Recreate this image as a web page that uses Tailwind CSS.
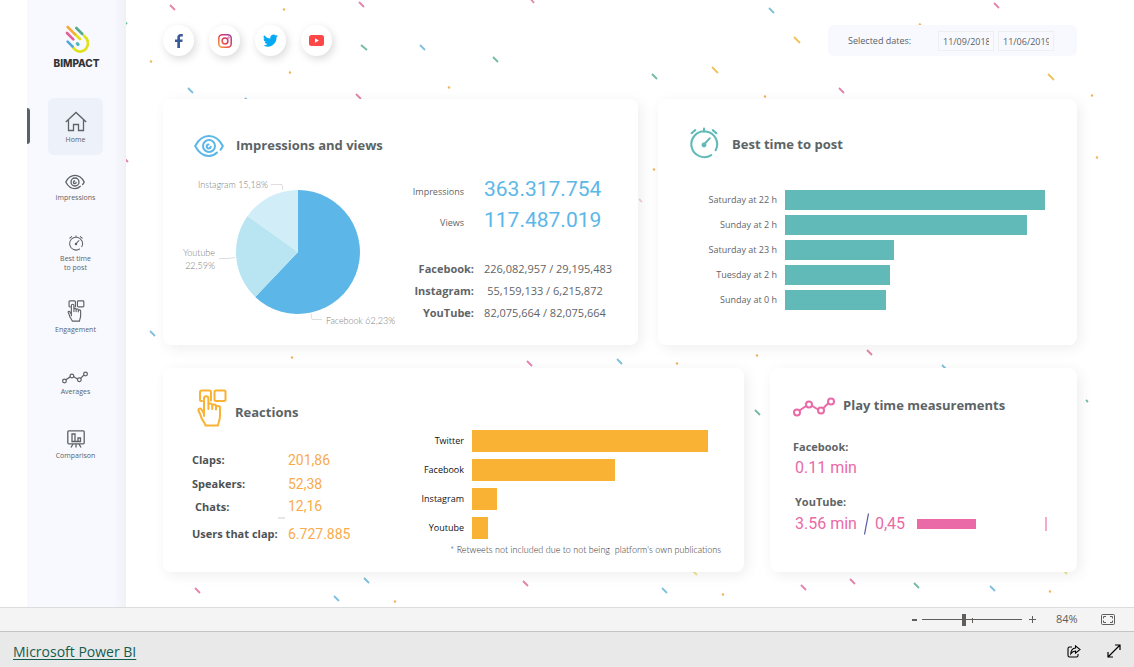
<!DOCTYPE html>
<html lang="en">
<head>
<meta charset="utf-8">
<meta name="viewport" content="width=device-width, initial-scale=1">
<title>Bimpact – Social media dashboard</title>
<script src="https://cdn.jsdelivr.net/npm/@tailwindcss/browser@4"></script>
</head>
<body class="flex min-h-screen flex-col bg-white font-['Open_Sans','Noto_Sans',sans-serif] text-[#5f6567]">

<!-- shared icon shapes -->
<svg class="hidden" aria-hidden="true">
  <symbol id="eye" viewBox="0 0 30 22">
    <g fill="none" stroke="currentColor" stroke-width="2" stroke-linecap="round">
      <path d="M23 17.500C20.500 20 18 21 15 21C8 21 3.500 15.500 1.200 11C3.500 6.500 8 1 15 1s11.500 5.500 13.800 10c-.7 1.500-1.400 2.700-2.300 3.800"/>
      <circle cx="15" cy="11" r="6"/>
      <path d="M14.500 9.500a2 2 0 1 0 2.200 2.200"/>
    </g>
  </symbol>
  <symbol id="watch" viewBox="0 0 28 31">
    <g fill="none" stroke="currentColor" stroke-width="2" stroke-linecap="round">
      <path d="M21 27.200A12.500 12.500 0 1 1 25.300 22.500M14 4.500V1.500M2 6L5.500 3M26 6L22.500 3M14 17L19.500 11"/>
    </g>
    <circle cx="14" cy="17.500" r="2.400" fill="currentColor"/>
  </symbol>
  <symbol id="touch" viewBox="0 0 30 38">
    <g fill="none" stroke="currentColor" stroke-width="2" stroke-linejoin="round" stroke-linecap="round">
      <path d="M5 12H4a1 1 0 0 1-1-1V3a1.500 1.500 0 0 1 1.500-1.500h8A1.500 1.500 0 0 1 14 3v8.500"/>
      <rect x="17.500" y="1.500" width="11" height="10.500" rx="1.500"/>
      <path d="M7 27V9.500a2.200 2.200 0 0 1 4.400 0V20M11.400 16c0-2 3.800-2 3.800 0v4M15.200 17c0-2 3.800-2 3.800 0v3.500M19 18.500c0-2 4-2 4 .3V27c0 4-1.500 5.500-2 9.500H8.500C8 33 4.500 31.500 3.500 26L1.500 21.500c-.5-1.800 2-2.800 3-1L7 24.500"/>
    </g>
  </symbol>
  <symbol id="trend" viewBox="0 0 42 20">
    <g fill="none" stroke="currentColor" stroke-width="2">
      <path d="M6.500 13.500L13 9M18.500 8.500L25 12.500M30 11.500L35.500 6"/>
      <circle cx="4" cy="15.500" r="3"/><circle cx="16" cy="7.500" r="3"/><circle cx="28" cy="13.500" r="3"/><circle cx="38" cy="4.500" r="3"/>
    </g>
  </symbol>
</svg>

<div class="relative flex grow bg-white pl-[27px]">

  <!-- confetti backdrop -->
  <svg class="absolute inset-0 h-full w-full" aria-hidden="true" stroke-width="1.800" fill="none">
    <path stroke="#e583ac" d="M170 5l5 5M359 2l5 5M529-3l5 6M356 94l5 5M994 3l5 5M839 88l5 5M527 361l5 5M867 350l5 5M124 158l4 4M195 588l5 5M523 581l5 5M801 585l5 5M850 579l5 5"/>
    <path stroke="#f3cfdd" d="M639 199l3 3"/>
    <path stroke="#74bba4" d="M361 45l6 5M493 57l5 5M652 74l5 5M755 410l5 5M914 583l5 5M1086 400l2 2M125 22l2 2"/>
    <path stroke="#7fc0df" d="M420 45l5 5M188 88l5 5M769 8l5 5M617 359l5 5M150 331l5 5M364 578l5 5M334 596l5 5M662 588l5 5M990 586l5 5M942 365l5 5M245 98l2 2"/>
    <path stroke="#efc35a" d="M794 37l6 6M712 67l6 6M1048 74l6 6"/>
    <path stroke="#e9e58f" d="M692 570l5 5M1063 570l4 4"/>
    <path stroke="#f0b45c" stroke-width="2" d="M150 61l2 1M289 72l2 1M448 87l2 1M283 9l2 1M653 169l2 1M1096 157l2 1M1091 95l2 1M676 363l2 1M756 355l2 1M291 357l2 1M394 601l2 1M722 594l2 1M1049 591l2 1M764 96l2 1M919 24l2 1"/>
  </svg>

  <!-- sidebar -->
  <aside class="relative w-[99px] shrink-0 bg-[linear-gradient(to_right,#f8f9ff_88%,#eff1f6)]">
    <div class="flex flex-col items-center pt-[25px]">
      <svg class="h-7 w-6" viewBox="0 0 72 84" fill="none" stroke-width="8" stroke-linecap="round" role="img" aria-label="Bimpact logo">
        <path stroke="#dfe21b" d="M58 33C70 44 71 56 66 66C59 81 41 84 29 73L24 67M30 27L45 42"/>
        <path stroke="#f7a93c" d="M8 6L30 28"/>
        <path stroke="#55aa8c" d="M34 9L52 27"/>
        <path stroke="#e2609e" d="M6 24L25 43"/>
        <path stroke="#54a8d8" d="M8 50L23 65"/>
        <path stroke="#50b8bd" stroke-width="10" d="M37 56L39 58"/>
      </svg>
      <span class="mt-[3px] font-['Inter',sans-serif] text-[10px] leading-[14px] font-extrabold text-[#333]">BIMPACT</span>
    </div>
    <nav class="mt-7 flex flex-col items-center pr-[2px] text-center text-[7px] leading-[10px] text-[#5c6265]">
      <a href="#" class="flex h-[57px] w-[55px] flex-col items-center rounded-md bg-[#edf1f9] pt-[13px]">
        <svg class="h-[21px] w-[22px]" viewBox="0 0 22 21" fill="none" stroke="currentColor" stroke-width="1.300"><path d="M.8 11L11 1.500L21.200 11M3.500 9V19.500H8.500V13.500H13.500V19.500H18.500V9"/></svg>
        <span class="mt-[3px]">Home</span>
      </a>
      <a href="#" class="mt-[19px] flex flex-col items-center gap-[3px]"><svg class="h-4 w-5"><use href="#eye"/></svg>Impressions</a>
      <a href="#" class="mt-8 flex flex-col items-center gap-[3px] leading-[9px]"><svg class="h-4 w-4"><use href="#watch"/></svg><span>Best time<br>to post</span></a>
      <a href="#" class="mt-7 flex flex-col items-center gap-[3px]"><svg class="h-[22px] w-[18px]"><use href="#touch"/></svg>Engagement</a>
      <a href="#" class="mt-9 flex flex-col items-center gap-[3px]"><svg class="h-[13px] w-[26px]"><use href="#trend"/></svg>Averages</a>
      <a href="#" class="mt-[33px] flex flex-col items-center gap-[3px]">
        <svg class="h-[18px] w-[18px]" viewBox="0 0 18 18" fill="none" stroke="currentColor" stroke-width="1.300"><rect x=".8" y=".8" width="16.400" height="13" rx="1"/><path d="M5 11.500V4H8V11.500ZM8 11.500H13.500V8H11V11.500M6 14L4 17.500M12 14L14 17.500M9 14V17.500"/></svg>
        Comparison
      </a>
    </nav>
    <span class="absolute top-[108px] left-0 h-9 w-[3px] rounded-r-sm bg-[#5c6163]"></span>
  </aside>

  <!-- dashboard -->
  <main class="relative flex min-w-0 grow flex-col pt-[25px] pr-[57px] pb-[35px] pl-[37px]">
    <header class="flex h-[31px] items-center justify-between">
      <div class="flex gap-[15px]">
        <a href="#" aria-label="Facebook" class="flex size-[31px] items-center justify-center rounded-full bg-white shadow-[2px_3px_8px_#00000026]">
          <svg class="h-[14px] w-2" viewBox="0 0 8 14" fill="#3b5a9a"><path d="M2.300 14V8H0V5.500H2.300V3.600C2.300 1.300 3.600 0 5.700 0C6.700 0 7.600.1 7.800.1V2.500H6.300C5.200 2.500 5 3 5 3.800V5.500H7.700L7.300 8H5V14Z"/></svg>
        </a>
        <a href="#" aria-label="Instagram" class="flex size-[31px] items-center justify-center rounded-full bg-white shadow-[2px_3px_8px_#00000026]">
          <svg class="size-[14px]" viewBox="0 0 14 14" fill="none" stroke="url(#ig)" stroke-width="1.500"><defs><linearGradient id="ig" gradientUnits="userSpaceOnUse" x1="0" y1="14" x2="14" y2="0"><stop stop-color="#fbb03b"/><stop offset=".5" stop-color="#e23b53"/><stop offset="1" stop-color="#9a36b8"/></linearGradient></defs><rect x=".8" y=".8" width="12.400" height="12.400" rx="3.500"/><circle cx="7" cy="7" r="2.900"/><circle cx="10.600" cy="3.500" r=".3"/></svg>
        </a>
        <a href="#" aria-label="Twitter" class="flex size-[31px] items-center justify-center rounded-full bg-white shadow-[2px_3px_8px_#00000026]">
          <svg class="h-[13px] w-[15px]" viewBox="0 1.500 24 20.500" fill="#03a9f4"><path d="M24 4.600a10 10 0 0 1-2.800.8 5 5 0 0 0 2.200-2.700 10 10 0 0 1-3.100 1.200 4.900 4.900 0 0 0-8.400 4.500A14 14 0 0 1 1.700 3.200 4.900 4.900 0 0 0 3.200 9.700 5 5 0 0 1 1 9.100a4.900 4.900 0 0 0 3.900 4.900 5 5 0 0 1-2.200.1 4.900 4.900 0 0 0 4.600 3.400A9.900 9.900 0 0 1 0 19.500a14 14 0 0 0 21.500-12.400A10 10 0 0 0 24 4.600Z"/></svg>
        </a>
        <a href="#" aria-label="YouTube" class="flex size-[31px] items-center justify-center rounded-full bg-white shadow-[2px_3px_8px_#00000026]">
          <svg class="h-[11px] w-[15px]" viewBox="0 0 15 11"><rect width="15" height="11" rx="2.500" fill="#ff4747"/><path d="M6 3.200L9.800 5.500L6 7.800Z" fill="#fff"/></svg>
        </a>
      </div>
      <div class="flex h-[31px] w-[249px] items-center rounded-md bg-[#f8f9ff] pt-px pl-5 text-[9px] text-[#5a5f62]">
        <label for="from" class="w-[90px]">Selected dates:</label>
        <input id="from" type="text" value="11/09/2018" aria-label="Start date" class="h-5 w-14 border border-[#eeeff1] bg-transparent px-1">
        <input id="to" type="text" value="11/06/2019" aria-label="End date" class="ml-1 h-5 w-14 border border-[#eeeff1] bg-transparent px-1">
      </div>
    </header>

    <div class="mt-[43px] grid grid-cols-[475fr_419fr] gap-5">
      <!-- impressions and views -->
      <section class="min-w-0 rounded-lg bg-white pt-[34px] pb-[17px] shadow-[3px_3px_14px_#00000012]">
        <h2 class="flex h-[26px] items-center gap-3 pl-[31px] text-[13px] font-bold text-[#5c6466]">
          <svg class="h-[22px] w-[30px] text-[#5bb7e8]"><use href="#eye"/></svg>Impressions and views
        </h2>
        <div class="mt-[15px] flex justify-between pr-8 pl-4">
          <svg class="h-[154px] w-[216px] shrink-0 overflow-visible font-['Lato',sans-serif] font-light" viewBox="0 0 216 154" font-size="9" fill="#808080" role="img" aria-label="Share of impressions by network">
            <path fill="#5cb6e7" d="M119 78V16A62 62 0 1 1 76.200 122.900Z"/>
            <path fill="#b8e5f1" d="M119 78L76.200 122.900A62 62 0 0 1 68.600 41.900Z"/>
            <path fill="#d0edf8" d="M119 78L68.600 41.900A62 62 0 0 1 119 16Z"/>
            <path fill="none" stroke="#dedede" d="M92 10.500H103L104 16M40 84.500H50L56 83.500M132 140L133 145.500H143"/>
            <text x="89" y="14" text-anchor="end">Instagram 15,18%</text>
            <text x="36" y="82" text-anchor="end">Youtube</text>
            <text x="36" y="95" text-anchor="end">22,59%</text>
            <text x="147" y="150">Facebook 62,23%</text>
          </svg>
          <div>
            <dl class="grid grid-cols-[60px_1fr] gap-x-5 text-right">
              <dt class="self-center pt-1 text-[9px]">Impressions</dt>
              <dd class="text-left font-['Roboto',sans-serif] text-[21px] leading-[31px] text-[#5bb7e8]">363.317.754</dd>
              <dt class="self-center pt-1 text-[9px]">Views</dt>
              <dd class="text-left font-['Roboto',sans-serif] text-[21px] leading-[31px] text-[#5bb7e8]">117.487.019</dd>
            </dl>
            <dl class="mt-[22px] grid grid-cols-[70px_122px] gap-x-[10px] text-right text-[11px] leading-[22px]">
              <dt class="font-bold">Facebook:</dt><dd class="text-center whitespace-nowrap">226,082,957 / 29,195,483</dd>
              <dt class="font-bold">Instagram:</dt><dd class="text-center whitespace-nowrap">55,159,133 / 6,215,872</dd>
              <dt class="font-bold">YouTube:</dt><dd class="text-center whitespace-nowrap">82,075,664 / 82,075,664</dd>
            </dl>
          </div>
        </div>
      </section>

      <!-- best time to post -->
      <section class="min-w-0 rounded-lg bg-white pt-7 shadow-[3px_3px_14px_#00000012]">
        <h2 class="flex h-8 items-center gap-[13px] pl-[31px] text-[13px] font-bold text-[#5c6466]">
          <svg class="h-8 w-[30px] text-[#62bab8]"><use href="#watch"/></svg><span class="pt-1">Best time to post</span>
        </h2>
        <div class="mt-[31px] grid grid-cols-[119px_1fr] gap-x-2 gap-y-[5px] pr-8 text-right text-[9px] leading-5">
          <span>Saturday at 22 h</span><div class="bg-[#62bab8]" style="width:100%"></div>
          <span>Sunday at 2 h</span><div class="bg-[#62bab8]" style="width:92.900%"></div>
          <span>Saturday at 23 h</span><div class="bg-[#62bab8]" style="width:41.900%"></div>
          <span>Tuesday at 2 h</span><div class="bg-[#62bab8]" style="width:40.400%"></div>
          <span>Sunday at 0 h</span><div class="bg-[#62bab8]" style="width:38.800%"></div>
        </div>
      </section>
    </div>

    <div class="mt-[23px] grid grid-cols-[581fr_307fr] gap-[26px]">
      <!-- reactions -->
      <section class="flex min-w-0 rounded-lg bg-white pb-4 shadow-[3px_3px_14px_#00000012]">
        <div class="w-[240px] shrink-0 pt-[21px] pl-[29px]">
          <h2 class="flex h-[38px] items-center gap-2 pl-[5px] text-[13px] font-bold text-[#5c6466]">
            <svg class="h-[38px] w-[30px] shrink-0 text-[#f9b233]"><use href="#touch"/></svg><span class="pt-[10px]">Reactions</span>
          </h2>
          <dl class="mt-5 grid grid-cols-[96px_1fr] items-center text-[11px] leading-6 font-bold text-[#4c5255] [&>dd]:pt-px [&>dd]:font-['Roboto',sans-serif] [&>dd]:text-[14px] [&>dd]:font-normal [&>dd]:text-[#f9ab4b]">
            <dt>Claps:</dt><dd>201,86</dd>
            <dt class="leading-[22px]">Speakers:</dt><dd class="leading-[22px]">52,38</dd>
            <dt class="pl-[3px] leading-[21px]">Chats:</dt><dd class="leading-[21px]">12,16</dd>
            <dt class="flex h-1 items-start justify-end pr-[3px]"><span class="h-[2px] w-[7px] bg-[#e6e6e6]"></span></dt><dd class="h-1"></dd>
            <dt>Users that clap:</dt><dd>6.727.885</dd>
          </dl>
        </div>
        <div class="min-w-0 grow pt-[62px] pr-[23px]">
          <div class="grid grid-cols-[61px_1fr] gap-x-2 gap-y-[7px] pr-[13px] text-right text-[9px] leading-[22px] text-[#111]">
            <span>Twitter</span><div class="bg-[#f9b233]" style="width:100%"></div>
            <span>Facebook</span><div class="bg-[#f9b233]" style="width:60.600%"></div>
            <span>Instagram</span><div class="bg-[#f9b233]" style="width:10.800%"></div>
            <span>Youtube</span><div class="bg-[#f9b233]" style="width:6.800%"></div>
          </div>
          <p class="mt-[5px] text-right font-['Lato',sans-serif] text-[9px] leading-3 font-light whitespace-pre text-[#333]">* Retweets not included due to not being  platform's own publications</p>
        </div>
      </section>

      <!-- play time -->
      <section class="min-w-0 rounded-lg bg-white pt-[27px] pr-[30px] pl-[23px] shadow-[3px_3px_14px_#00000012]">
        <h2 class="flex h-[22px] items-start gap-2 text-[13px] leading-5 font-bold text-[#5c6466]">
          <svg class="mt-[2px] h-5 w-[42px] text-[#e96aa6]"><use href="#trend"/></svg>Play time measurements
        </h2>
        <h3 class="mt-5 text-[11px] leading-5 font-bold">Facebook:</h3>
        <p class="pl-[2px] font-['Roboto',sans-serif] text-base leading-[22px] text-[#e96aa6]">0.11 min</p>
        <h3 class="mt-[13px] pl-[2px] text-[11px] leading-5 font-bold">YouTube:</h3>
        <div class="flex items-center pl-[2px] font-['Roboto',sans-serif] text-base leading-6 whitespace-nowrap text-[#e96aa6]">
          <span>3.56 min</span>
          <svg class="mr-[6px] ml-[7px] h-[22px] w-[5px] shrink-0" viewBox="0 0 5 22" stroke="#5457a6" stroke-width="1.200"><path d="M.5 21.500L4.500.5"/></svg>
          <span>0,45</span>
          <div class="ml-3 flex grow items-center justify-between">
            <div class="h-[10px] bg-[#e96aa6]" style="width:45%"></div>
            <div class="h-[14px] w-[2px] bg-[#f3abcc]"></div>
          </div>
        </div>
      </section>
    </div>
  </main>
</div>

<!-- zoom bar -->
<div class="flex h-6 shrink-0 items-center justify-end border-t border-[#dcdcdc] bg-[#f4f4f4] pr-[19px] text-[11px] text-[#605e5c]">
  <button type="button" aria-label="Zoom out" class="flex h-5 w-[15px] items-center justify-center"><svg class="h-[2px] w-[5px]" viewBox="0 0 5 2"><path fill="currentColor" d="M0 0H5V2H0Z"/></svg></button>
  <div class="relative flex h-5 items-center">
    <input type="range" min="0" max="100" value="42" aria-label="Zoom level" class="h-[1px] w-[100px] appearance-none bg-[#605e5c] [&::-webkit-slider-thumb]:h-3 [&::-webkit-slider-thumb]:w-1 [&::-webkit-slider-thumb]:appearance-none [&::-webkit-slider-thumb]:bg-[#605e5c]">
    <span class="absolute top-2 left-[50px] h-[5px] w-px bg-[#605e5c]"></span>
  </div>
  <button type="button" aria-label="Zoom in" class="flex h-5 w-[21px] items-center justify-center"><svg class="size-[7px]" viewBox="0 0 7 7"><path stroke="currentColor" d="M0 3.500H7M3.500 0V7"/></svg></button>
  <span class="w-[58px] pl-[13px]">84%</span>
  <button type="button" aria-label="Fit to page"><svg class="h-[11px] w-[14px]" viewBox="0 0 14 11" fill="none" stroke="currentColor"><rect x=".5" y=".5" width="13" height="10" rx="1"/><path d="M5 2.500H2.500V4.500M9 2.500H11.500V4.500M5 8.500H2.500V6.500M9 8.500H11.500V6.500"/></svg></button>
</div>

<footer class="flex h-[37px] shrink-0 items-center justify-between border-t border-[#c4c4c4] bg-[#e9e9e9] pt-[2px] pr-[13px] pl-[13px]">
  <a href="#" class="text-[14px] text-[#135c50] underline underline-offset-2">Microsoft Power BI</a>
  <div class="flex items-center gap-[26px] text-black">
    <button type="button" aria-label="Share"><svg class="h-[13px] w-[14px]" viewBox="0 0 14 13" fill="none" stroke="currentColor" stroke-width="1.100"><path d="M5 2H2.500Q1 2 1 3.500V10.500Q1 12 2.500 12H9.500Q11 12 11 10.500V9M8.500.8L13 4.500L8.500 8.200V6C6 6 5 7 3.800 8.800C4 5.500 5.500 3.300 8.500 3Z"/></svg></button>
    <button type="button" aria-label="Full screen"><svg class="size-[14px]" viewBox="0 0 14 14" fill="none" stroke="currentColor" stroke-width="1.200"><path d="M1 13L13 1M8 1H13V6M1 8V13H6"/></svg></button>
  </div>
</footer>
</body>
</html>
